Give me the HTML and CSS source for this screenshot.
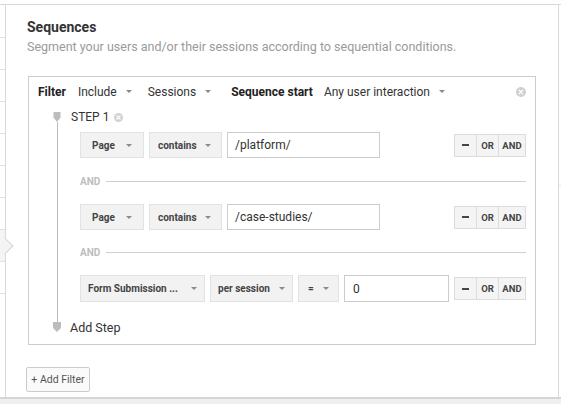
FILE: index.html
```html
<!DOCTYPE html>
<html lang="en">
<head>
<meta charset="utf-8">
<title>Sequences</title>
<link rel="stylesheet" href="styles.css">
</head>
<body>
<div class="app">
  <div class="topgap"></div>
  <div class="workspace">
    <aside class="sidebar">
      <div class="side-item"></div>
      <div class="side-item"></div>
      <div class="side-item"></div>
      <div class="side-item"></div>
      <div class="side-item"></div>
      <div class="side-item"></div>
      <div class="side-item"></div>
      <div class="side-item active"></div>
      <div class="side-item"></div>
    </aside>
    <main class="panel">
      <h2 class="title">Sequences</h2>
      <p class="subtitle">Segment your users and/or their sessions according to sequential conditions.</p>
      <section class="filter-box">
        <div class="filter-head">
          <span class="fh-label fh-filter">Filter</span>
          <span class="fh-menu fh-include">Include <i class="caret"></i></span>
          <span class="fh-menu fh-sessions">Sessions <i class="caret"></i></span>
          <span class="fh-label fh-seq">Sequence start</span>
          <span class="fh-menu">Any user interaction <i class="caret"></i></span>
          <span class="remove remove-lg"><svg width="10" height="10" viewBox="0 0 10 10"><circle cx="5" cy="5" r="5" fill="#cfcfcf"/><path d="M3.2 3.2L6.8 6.8M6.8 3.2L3.2 6.8" stroke="#fff" stroke-width="1.3" stroke-linecap="round"/></svg></span>
        </div>
        <div class="step-head">
          <svg class="marker" width="8" height="10" viewBox="0 0 8 10"><path d="M0.5 0H7.5V5.5L4 10L0.5 5.5Z" fill="#bdbdbd"/></svg>
          <span class="step-name">STEP 1</span>
          <span class="remove remove-sm"><svg width="9" height="9" viewBox="0 0 10 10"><circle cx="5" cy="5" r="5" fill="#d2d2d2"/><path d="M3.2 3.2L6.8 6.8M6.8 3.2L3.2 6.8" stroke="#fff" stroke-width="1.4" stroke-linecap="round"/></svg></span>
        </div>
        <div class="step-body">
          <div class="cond">
            <span class="dd dd-page">Page <i class="caret"></i></span>
            <span class="dd dd-contains">contains <i class="caret"></i></span>
            <span class="input input-wide">/platform/</span>
            <span class="btns"><span class="btn btn-minus" aria-label="remove"><i class="dash"></i></span><span class="btn btn-or">OR</span><span class="btn btn-and">AND</span></span>
          </div>
          <div class="sep">AND</div>
          <div class="cond">
            <span class="dd dd-page">Page <i class="caret"></i></span>
            <span class="dd dd-contains">contains <i class="caret"></i></span>
            <span class="input input-wide">/case-studies/</span>
            <span class="btns"><span class="btn btn-minus" aria-label="remove"><i class="dash"></i></span><span class="btn btn-or">OR</span><span class="btn btn-and">AND</span></span>
          </div>
          <div class="sep sep-short">AND</div>
          <div class="cond cond-tall">
            <span class="dd dd-form">Form Submission ... <i class="caret"></i></span>
            <span class="dd dd-per">per session <i class="caret"></i></span>
            <span class="dd dd-eq">= <i class="caret"></i></span>
            <span class="input input-narrow">0</span>
            <span class="btns"><span class="btn btn-minus" aria-label="remove"><i class="dash"></i></span><span class="btn btn-or">OR</span><span class="btn btn-and">AND</span></span>
          </div>
        </div>
        <div class="step-foot">
          <svg class="marker" width="8" height="10" viewBox="0 0 8 10"><path d="M0 0H8V6L4 10L0 6Z" fill="#bdbdbd"/></svg>
          <span class="add-step">Add Step</span>
        </div>
      </section>
      <button class="add-filter" type="button">+ Add Filter</button>
    </main>
    <div class="rightstrip"><div class="tick"></div></div>
  </div>
  <div class="bottombar"></div>
</div>
</body>
</html>
```
FILE: styles.css
```css
* { box-sizing: border-box; }

body {
  margin: 0;
  font-family: Roboto, "Liberation Sans", Arial, sans-serif;
  color: #333;
  background: #fff;
}

.app {
  width: 561px;
  height: 404px;
  display: flex;
  flex-direction: column;
  overflow: hidden;
}

.topgap { height: 4px; flex: none; }

.workspace {
  flex: none;
  height: 393px;
  display: flex;
  border-top: 1px solid #d9d9d9;
}

/* left list behind the panel */
.sidebar {
  width: 6px;
  flex: none;
  border-right: 1px solid #d9d9d9;
  padding-top: 1px;
}

.side-item {
  height: 32px;
  border-bottom: 1px solid #e2e2e2;
  position: relative;
}

.side-item.active { background: #f4f4f4; }

.side-item.active::after {
  content: "";
  position: absolute;
  left: -1px;
  top: 10px;
  width: 11px;
  height: 11px;
  background: #f4f4f4;
  border-top: 1px solid #d6d6d6;
  border-right: 1px solid #d6d6d6;
  transform: rotate(45deg);
  z-index: 2;
}

.panel {
  flex: 1;
  padding: 14px 21px 0 21px;
}

.rightstrip {
  width: 6px;
  flex: none;
  border-left: 1px solid #d9d9d9;
}

.tick {
  margin-top: 180px;
  border-top: 1px solid #e0e0e0;
}

.bottombar {
  flex: 1;
  background: #efefef;
  border-top: 2px solid #d5d5d5;
}

.title {
  margin: 0;
  font-size: 14px;
  line-height: 17px;
  font-weight: 700;
  color: #333;
}

.subtitle {
  margin: 3px 0 0;
  font-size: 12.5px;
  line-height: 16px;
  color: #9a9a9a;
}

.filter-box {
  margin: 21px 1px 0;
  border: 1px solid #cccccc;
  padding-bottom: 12px;
}

.filter-head {
  height: 29px;
  display: flex;
  align-items: center;
  padding: 0 9px;
  font-size: 12px;
}

.fh-label { font-weight: 700; color: #222; }
.fh-filter { margin-right: 12px; }
.fh-seq { margin-right: 11px; }

.fh-menu {
  display: flex;
  align-items: center;
  gap: 9px;
  color: #333;
}
.fh-include { margin-right: 16px; }
.fh-sessions { margin-right: 20px; }

.caret {
  display: block;
  width: 0;
  height: 0;
  border-left: 3px solid transparent;
  border-right: 3px solid transparent;
  border-top: 3px solid #8a8a8a;
}

.remove { display: flex; }
.remove-lg { margin-left: auto; }
.remove-sm { margin-left: 5px; }

.step-head {
  height: 10px;
  margin-top: 6px;
  display: flex;
  align-items: center;
  padding-left: 24px;
}

.marker { display: block; flex: none; }

.step-name {
  margin-left: 10px;
  font-size: 12px;
  color: #333;
}

.step-body {
  margin: 0 9px 0 28px;
  border-left: 1px solid #bdbdbd;
  padding: 10px 0 20px 22px;
}

.cond {
  height: 26px;
  display: flex;
  align-items: center;
  gap: 5px;
}
.cond-tall { height: 27px; }

.dd {
  height: 100%;
  display: flex;
  align-items: center;
  justify-content: space-between;
  background: #f2f2f2;
  border: 1px solid #e2e2e2;
  font-size: 10px;
  font-weight: 700;
  color: #444;
}
.dd-page { width: 64px; padding: 0 11px 0 11px; }
.dd-contains { width: 73px; padding: 0 10px 0 8px; }
.dd-form { width: 125px; padding: 0 7px 0 7px; }
.dd-per { width: 83px; padding: 0 7px 0 7px; }
.dd-eq { width: 41px; padding: 0 9px 0 9px; }

.input {
  height: 100%;
  display: flex;
  align-items: center;
  background: #fff;
  border: 1px solid #cccccc;
  font-size: 12px;
  color: #333;
}
.input-wide { width: 153px; padding-left: 7px; }
.input-narrow { width: 105px; padding-left: 8px; }

.btns {
  margin-left: auto;
  height: 23px;
  display: flex;
}

.btn {
  display: flex;
  align-items: center;
  justify-content: center;
  background: #f4f4f4;
  border: 1px solid #dcdcdc;
  font-size: 9.5px;
  font-weight: 700;
  color: #444;
}
.btn + .btn { margin-left: -1px; }
.btn-minus { width: 23px; }
.btn-or { width: 23px; }
.btn-and { width: 28px; }

.dash {
  display: block;
  width: 7px;
  height: 2px;
  background: #444;
}

.sep {
  height: 46px;
  display: flex;
  align-items: center;
  gap: 6px;
  font-size: 10px;
  font-weight: 700;
  color: #bdbdbd;
}
.sep::after {
  content: "";
  flex: 1;
  border-top: 1px solid #cfcfcf;
}
.sep-short { height: 45px; }

.step-foot {
  height: 10px;
  display: flex;
  align-items: center;
  padding-left: 24px;
}

.add-step {
  margin-left: 9px;
  font-size: 12.5px;
  color: #333;
}

.add-filter {
  display: block;
  margin: 22px 0 0 -1px;
  width: 64px;
  height: 25px;
  padding: 0;
  background: #fafafa;
  border: 1px solid #cccccc;
  border-radius: 2px;
  font-family: Roboto, "Liberation Sans", Arial, sans-serif;
  font-size: 10.5px;
  color: #555;
}
```
